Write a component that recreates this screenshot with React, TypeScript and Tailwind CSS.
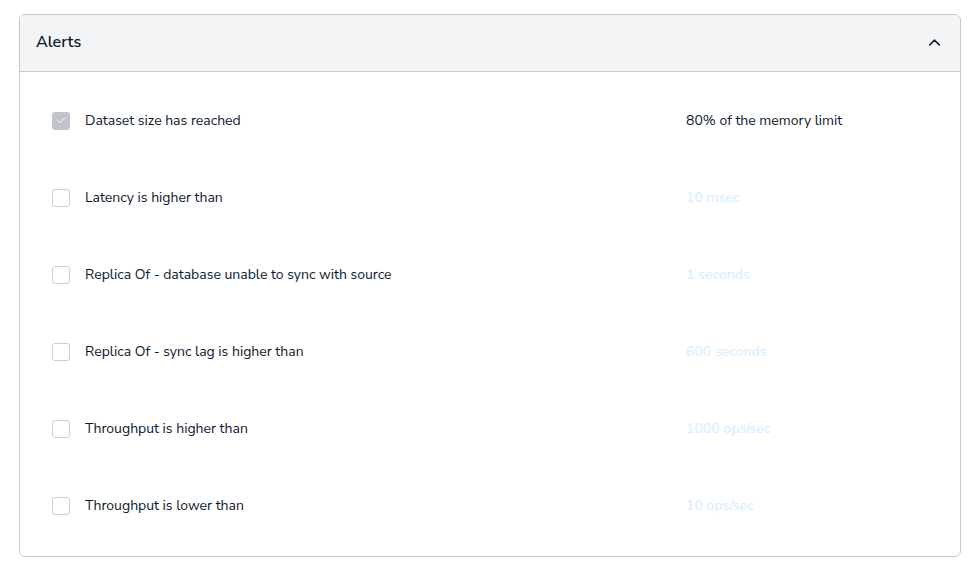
import React from 'react';
import { ChevronUp, Check } from 'lucide-react';

interface AlertRow {
  label: string;
  value: string;
  checked: boolean;
}

const ROWS: AlertRow[] = [
  { label: 'Dataset size has reached', value: '80% of the memory limit', checked: true },
  { label: 'Latency is higher than', value: '10 msec', checked: false },
  { label: 'Replica Of - database unable to sync with source', value: '1 seconds', checked: false },
  { label: 'Replica Of - sync lag is higher than', value: '600 seconds', checked: false },
  { label: 'Throughput is higher than', value: '1000 ops/sec', checked: false },
  { label: 'Throughput is lower than', value: '10 ops/sec', checked: false },
];

const Checkbox: React.FC<{ checked: boolean }> = ({ checked }) =>
  checked ? (
    <span className="w-[18px] h-[18px] rounded-[3px] bg-[#bfc5ca] flex items-center justify-center flex-shrink-0">
      <Check size={11} strokeWidth={2} className="text-white" />
    </span>
  ) : (
    <span className="w-[18px] h-[18px] rounded-[3px] border border-[#c9ced3] bg-white flex-shrink-0" />
  );

export default function App() {
  return (
    <div
      className="w-[973px] h-[569px] bg-white pl-[19px] pt-[14px]"
      style={{ fontFamily: '"Nunito Sans", Lato, "Open Sans", sans-serif' }}
    >
      <div className="w-[942px] border border-[#c3c9cf] rounded-[6px] overflow-hidden">
        {/* Header */}
        <div className="h-[57px] bg-[#f3f4f6] border-b border-[#c3c9cf] flex items-center pl-4 pr-4 pb-[2px]">
          <span className="text-[16px] font-semibold text-[#0c1a30]">Alerts</span>
          <ChevronUp size={19} strokeWidth={1.8} className="ml-auto text-[#0c1a30]" />
        </div>

        {/* Body */}
        <div className="pt-[10px] pb-[12px] pl-[32px]">
          {ROWS.map(row => (
            <div key={row.label} className="h-[77px] flex items-center">
              <Checkbox checked={row.checked} />
              <span className="ml-[15px] w-[601px] text-[14px] text-[#0c1a30]">{row.label}</span>
              <span
                className={`text-[14px] ${row.checked ? 'text-[#0c1a30]' : 'text-[#daeefc] font-semibold'}`}
              >
                {row.value}
              </span>
            </div>
          ))}
        </div>
      </div>
    </div>
  );
}
